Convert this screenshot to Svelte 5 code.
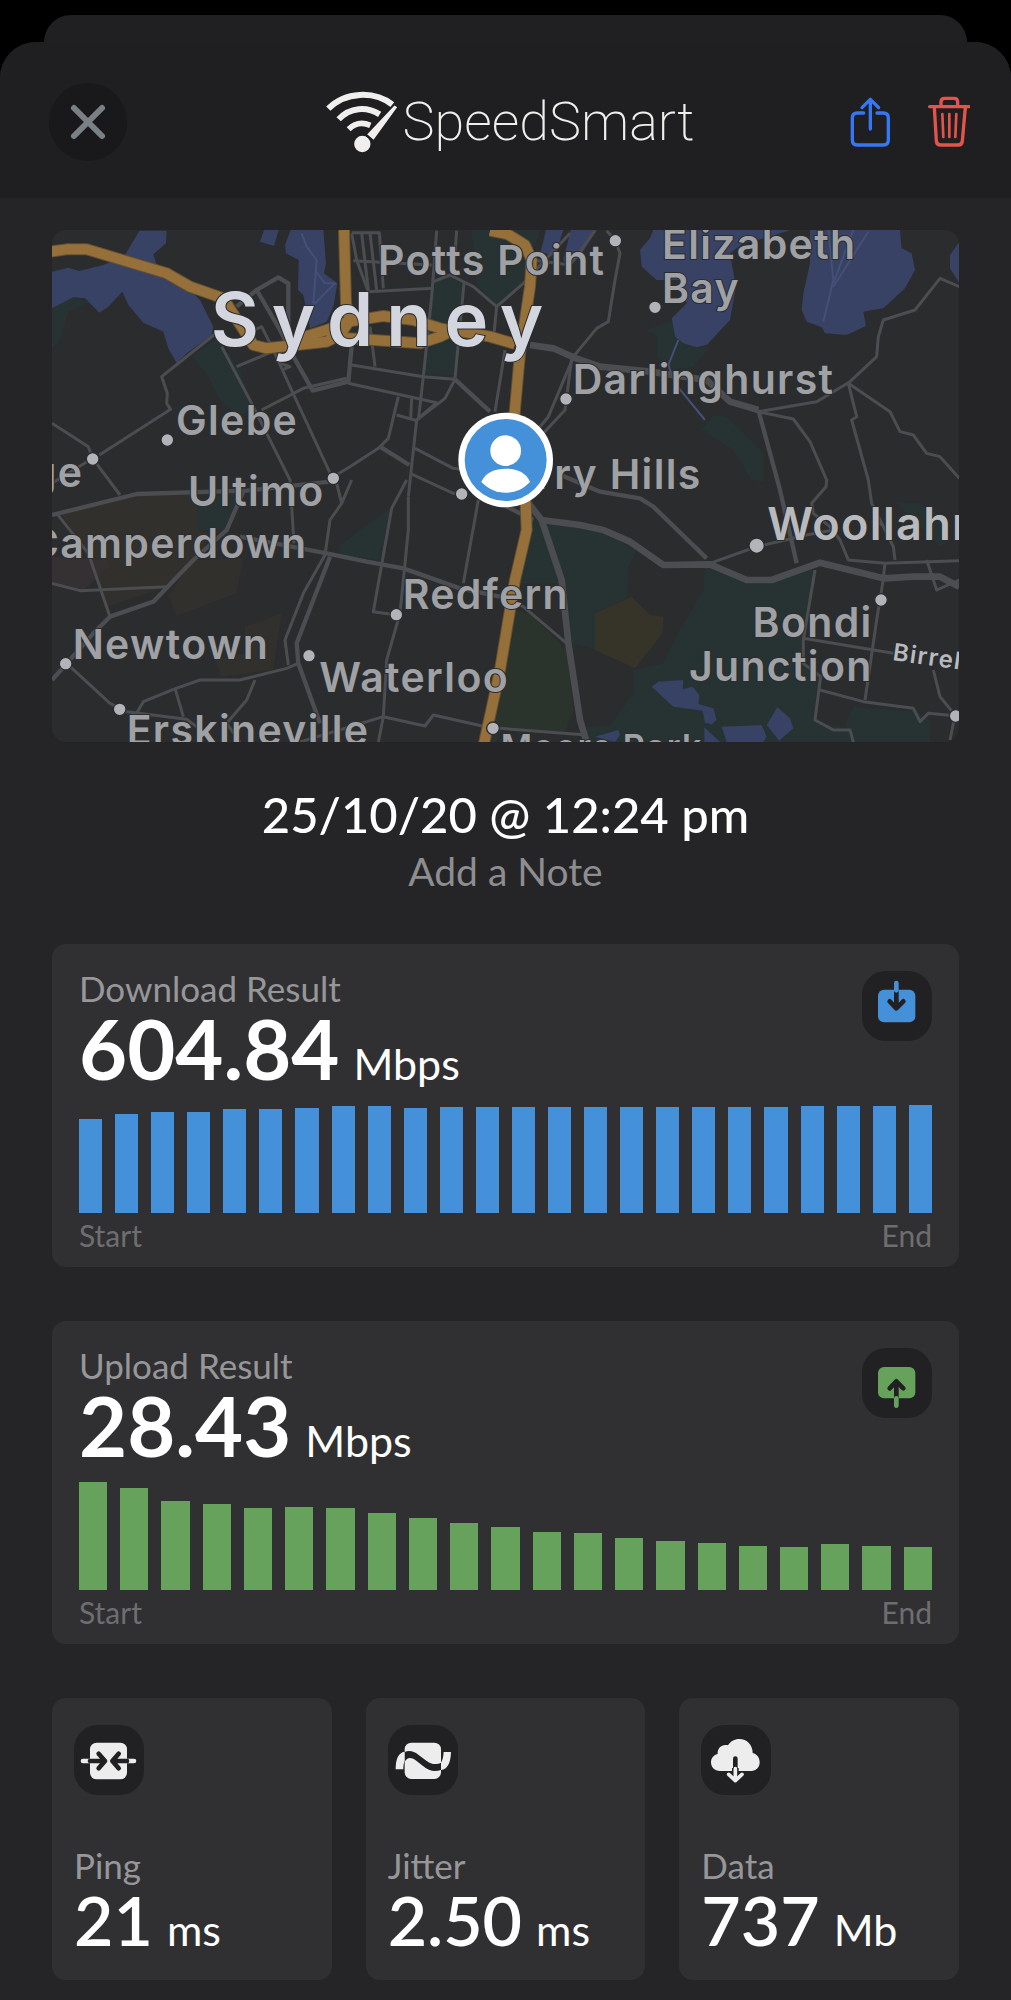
<script>
  const tests = [
    {
      id: 'download',
      title: 'Download Result',
      value: '604.84',
      bars: [94, 99, 101, 101, 104, 104, 105, 107, 107, 105, 106, 106, 106, 106, 106, 106, 106, 106, 106, 106, 107, 107, 107, 108]
    },
    {
      id: 'upload',
      title: 'Upload Result',
      value: '28.43',
      bars: [108, 102, 89, 86, 82, 83, 82, 77, 72, 67, 63, 58, 57, 52, 49, 47, 44, 43, 46, 44, 43]
    }
  ];

  const stats = [
    { id: 'ping', title: 'Ping', value: '21', unit: 'ms' },
    { id: 'jitter', title: 'Jitter', value: '2.50', unit: 'ms' },
    { id: 'data', title: 'Data', value: '737', unit: 'Mb' }
  ];

  const water = [
    '36,155 85,143 118,153 190,135 255,105 298,32 380,32 378,70 340,103 348,130 400,165 450,210 480,240 520,320 515,345 440,400 410,430 385,385 370,335 310,308 265,255 247,215 205,260 178,278 135,235 100,232 36,265',
    '672,30 716,30 702,78 660,65',
    '752,30 850,30 858,130 852,160 892,190 880,260 860,305 810,325 790,225 774,210 776,120 738,100 735,75',
    '1518,30 1570,30 1545,110 1502,95',
    '1592,30 1670,30 1620,110 1585,140 1570,120',
    '1840,30 2250,30 2190,50 2110,70 2070,100 2088,200 2070,300 2000,375 1970,382 1930,370 1905,350 1895,295 1940,250 1920,180 1850,180 1805,140 1800,90 1830,55',
    '2310,30 2580,30 2585,85 2615,100 2625,150 2595,205 2530,265 2470,275 2478,318 2420,345 2355,340 2345,322 2300,305 2285,270 2290,220 2310,130',
    '2758,65 2730,105 2730,145 2758,190',
    '1835,1400 1855,1385 1930,1380 1928,1408 1958,1400 1978,1425 1975,1452 2020,1465 2030,1500 2015,1513 1995,1508 1988,1472 1900,1460',
    '2045,1520 2165,1515 2180,1550 2170,1566 2060,1566',
    '2212,1462 2250,1495 2260,1525 2218,1562 2180,1515',
    '1993,1522 2040,1566 1993,1566',
    '1665,1550 1735,1530 1740,1545 1725,1566'
  ];

  const parks = [
    '36,265 100,232 148,245 85,275 60,360 36,385',
    '455,410 530,355 600,450 640,560 600,590 540,540 500,460',
    '1180,185 1230,165 1272,190 1270,260 1245,465 1165,468 1150,450 1175,250',
    '1295,30 1500,30 1450,190 1370,255 1310,195',
    '1820,330 1895,300 1905,350 1970,382 2010,380 1960,440 1900,450 1850,410 1850,345',
    '1985,630 2020,585 2060,590 2170,700 2172,785 2135,780 2080,690',
    '470,840 610,815 590,870 560,930 475,930',
    '900,975 1050,865 1020,1020 900,1005',
    '1995,1040 2020,1035 2120,1080 2195,1080 2280,1042 2325,1050 2290,1260 2295,1330 2340,1370 2325,1500 2435,1530 2440,1566 1645,1566 1640,1520 1710,1515 1780,1420 1780,1350 1870,1330 1920,1230 1990,1110',
    '1480,900 1690,930 1790,995 1765,1040 1762,1135 1665,1180 1670,1290 1595,1270 1565,1090 1425,1090 1460,930',
    '2440,1460 2630,1475 2670,1500 2670,1566 2440,1566 2415,1515',
    '2570,850 2640,850 2720,900 2730,960 2700,980 2620,900'
  ];

  const grounds = [
    '60,880 290,825 470,825 475,930 520,945 460,1020 380,1100 200,1160 180,1100 120,960',
    '385,1125 460,1020 610,1015 590,1120 410,1188',
    '615,1220 725,1180 700,1350 545,1370 525,1320 615,1300'
  ];

  const streets = [
    '540,330 365,470 382,520 380,550 392,568 178,705',
    '36,610 145,680 158,715 36,790',
    '160,718 240,825',
    '620,340 665,320 700,390 750,500 875,770',
    '590,440 720,385',
    '720,430 750,440 725,450',
    '545,380 640,560 750,780 762,970',
    '665,570 790,505 920,475',
    '925,490 1190,548 1130,600',
    '935,435 1150,470 1245,478',
    '1245,478 1215,535 1130,600 1105,830',
    '1150,470 1135,600',
    '1075,530 1045,655 1015,685 930,740 880,770',
    '1070,585 1130,602',
    '1115,535 1112,595',
    '1125,685 1240,745 1280,750',
    '1110,760 1240,820 1265,822',
    '935,40 950,120 985,215 1180,205',
    '965,40 985,210',
    '990,40 1010,210',
    '935,38 1018,38 1030,205',
    '940,122 1175,135',
    '1190,32 1175,230 1150,470',
    '1250,32 1240,170',
    '1180,185 1230,165 1300,200 1370,260 1450,190 1590,40',
    '1480,120 1590,135 1665,32',
    '1272,190 1245,475',
    '990,320 1005,440',
    '1370,260 1362,340',
    '1395,390 1365,575',
    '1700,32 1725,60 1740,100 1725,180 1705,305 1670,325 1600,410',
    '1600,412 1525,590 1500,620',
    '1595,415 1575,570 1510,640',
    '2155,575 2330,545 2430,485 2510,410 2515,350 2530,300 2625,270 2700,175 2758,200',
    '2155,575 2260,597 2310,665 2360,780 2358,800 2315,850 2320,880 2370,920 2400,960 2425,1020 2535,1030',
    '2425,490 2550,575 2580,635 2620,645 2660,700 2700,710 2758,775',
    '2425,490 2450,590 2435,600 2485,780 2495,850 2560,980 2565,1020',
    '2495,905 2530,915',
    '2010,1030 2150,980 2300,945 2380,930',
    '2535,1030 2758,1022',
    '2535,1030 2528,1090 2510,1200 2475,1440',
    '2325,1050 2290,1260 2290,1330 2342,1370 2325,1500 2380,1530 2430,1530 2440,1566',
    '2290,1255 2560,1300',
    '2340,1410 2470,1445 2620,1465 2640,1505 2665,1480 2750,1488',
    '2660,1020 2690,1110 2758,1080',
    '2680,1350 2700,1430 2745,1485 2730,1560',
    '1380,1130 1450,1160 1580,1270',
    '1380,1525 1640,1545',
    '50,880 145,1000 210,1190',
    '36,1090 120,1112 380,1100',
    '80,1330 210,1450 260,1475 440,1498 470,1520',
    '290,1480 310,1445 400,1408 480,1380 600,1380 740,1345 775,1330',
    '405,1405 430,1490',
    '645,1380 620,1440 560,1510 600,1566',
    '890,790 905,850 870,900 855,1005 790,1120 735,1260 745,1335',
    '935,780 905,850',
    '1100,780 1055,865 1000,1175 1070,1185',
    '1105,830 1105,930 1080,1180 1040,1320 1030,1490 1015,1566',
    '1315,840 1270,1090',
    '780,1566 1030,1490 1155,1518 1180,1485 1380,1530'
  ];

  const mainRoads = [
    '590,260 650,210 715,172 745,190 745,330',
    '650,210 720,330 755,400 818,512 925,485 935,380',
    '1245,478 1350,575',
    '1020,680 1108,735',
    '2155,570 2220,810 2270,1030',
    '1550,760 1680,815 1800,835 1840,860 2000,1015',
    '1380,850 1480,900',
    '36,885 290,822 620,812 870,785',
    '36,1380 160,1240 210,1190 340,1145 460,1020 560,930 610,815',
    '870,1010 770,1270 775,1330 840,1510',
    '600,950 860,1000 980,1025 1090,1045 1260,1105 1380,1130'
  ];

  const arterials = [
    '1470,375 1540,385 1600,412 1680,440 1830,455 2000,480 2070,545 2155,570',
    '1450,830 1505,900 1565,1080 1585,1270 1620,1500 1640,1566',
    '1505,900 1620,915 1690,930 1770,965 1870,1035 2010,1033 2120,1080 2195,1080 2340,1028 2530,1075 2620,1070 2700,1070 2758,1100'
  ];

  const highways = [
    '30,95 80,88 140,88 380,160 450,200 550,235 585,290 640,375 680,385 860,365 900,345',
    '912,30 918,250 930,300 900,345',
    '780,355 860,330 925,305 1030,288 1120,300 1200,325 1240,332',
    '860,350 1140,370 1200,350 1240,330 1350,350 1425,372',
    '1350,32 1402,42 1455,75 1475,120 1470,200 1440,400 1422,600',
    '1455,800 1460,930 1425,1080 1380,1350 1330,1580'
  ];

  const creeks = [
    '1915,360 1885,435 1905,490 1995,600',
    '785,40 800,80 830,120 820,250',
    '825,150 855,190 885,190 820,255',
    '2365,30 2380,180 2350,305',
    '2440,30 2380,190',
    '2485,35 2380,200'
  ];

  const dots = [
    [382, 660], [158, 717], [880, 775], [1726, 62], [1845, 262], [1578, 537], [1265, 822],
    [1069, 1184], [77, 1331], [807, 1307], [239, 1468], [1359, 1525], [2523, 1140], [2747, 1488]
  ];

  const places = [
    ['Potts Point', 1014, 166],
    ['Elizabeth', 1866, 118],
    ['Bay', 1866, 248],
    ['Darlinghurst', 1598, 522],
    ['Glebe', 408, 645],
    ['Ultimo', 444, 859],
    ['Newtown', 98, 1316],
    ['Redfern', 1088, 1167],
    ['Waterloo', 838, 1415],
    ['Erskineville', 260, 1575]
  ];

  const placesEnd = [
    ['Forest Lodge', 130, 802],
    ['Camperdown', 802, 1014],
    ['Surry Hills', 1985, 807],
    ['Bondi', 2498, 1252],
    ['Junction', 2498, 1384]
  ];
</script>

{#snippet icon(id)}
  <span class="tile {id}">
    <svg viewBox="15 15 210 210" aria-hidden="true">
      {#if id === 'download'}
        <rect class="fill" x="63" y="71" width="112" height="98" rx="18" />
        <path class="ink" d="M118 72V126M98 106L118 127L139 106" />
        <path class="line" d="M118 51V73" />
      {:else if id === 'upload'}
        <rect class="fill" x="63" y="72" width="112" height="94" rx="18" />
        <path class="ink" d="M118 165V116M98 136L118 115L139 136" />
        <path class="line" d="M118 166V188" />
      {:else if id === 'ping'}
        <rect class="fill" x="63" y="68" width="111" height="110" rx="20" />
        <path class="line" d="M42 123H62M175 123H195" />
        <path class="ink" d="M63 123H105M89 101L108 123L89 145M174 123H133M149 101L130 123L149 145" />
      {:else if id === 'jitter'}
        <rect class="fill" x="65" y="68" width="109" height="109" rx="20" />
        <path class="dark" d="M65 96C78 90 92 93 106 104L130 122C144 132 158 136 174 128V150C154 156 138 153 120 138L98 121C84 111 72 112 65 126Z" />
        <path class="fill" d="M38 148C38 116 46 98 65 95V122C62 130 61 138 61 148Z" />
        <path class="fill" d="M204 96C203 128 194 148 174 150V128C180 118 181 108 182 96Z" />
      {:else}
        <path class="fill" d="M72 153C56 153 45 142 45 127C45 114 53 105 65 102C63 84 79 71 96 76C103 64 116 57 130 57C153 57 170 75 170 99C183 102 191 113 191 127C191 143 180 153 166 153Z" />
        <path class="ink" d="M118 116V146" />
        <path class="dark" d="M108 144H128V160H108Z" />
        <path class="line thin" d="M118 146V180M98 163L118 182L138 163" />
      {/if}
    </svg>
  </span>
{/snippet}

<div class="screen">
  <div class="sheet-behind"></div>
  <div class="sheet">
    <header>
      <button class="close" aria-label="Close">
        <svg viewBox="0 0 78 78" aria-hidden="true"><path d="M25 25L53 53M53 25L25 53" /></svg>
      </button>
      <h1 class="brand">
        <svg viewBox="30 30 222 186" aria-hidden="true">
          <path d="M40 83C90 32 178 28 232 71" stroke-width="18" />
          <path d="M71 115C105 78 155 76 194 100" stroke-width="18" />
          <path d="M101 145C120 126 142 123 166 133" stroke-width="17" />
          <path class="solid" d="M238 70L250 78L176 180L153 160Z" />
          <circle class="solid rim" cx="142" cy="189" r="27" />
        </svg>
        <span>SpeedSmart</span>
      </h1>
      <div class="actions">
        <button aria-label="Share">
          <svg class="share" viewBox="30 42 126 156" aria-hidden="true">
            <path d="M71 93H52Q37 93 37 108V174Q37 189 52 189H130Q145 189 145 174V108Q145 93 130 93H111" />
            <path d="M91 141V54M66 77L91 52L116 77" />
          </svg>
        </button>
        <button aria-label="Delete">
          <svg class="trash" viewBox="262 42 126 156" aria-hidden="true">
            <path d="M267 74H385M281 76L287 177Q288 189 300 189H352Q364 189 365 177L374 76" />
            <path d="M301 72V60Q301 49 312 49H340Q351 49 351 60V72" />
            <path class="ribs" d="M305 96L308 165M326 96V165M347 96L344 165" />
          </svg>
        </button>
      </div>
    </header>

    <main>
      <div class="map">
        <svg viewBox="36 30 2721 1536" role="img" aria-label="Map of Sydney">
          <rect class="land" x="36" y="30" width="2721" height="1536" />
          {#each parks as p}<polygon class="park" points={p} />{/each}
          {#each grounds as p}<polygon class="ground" points={p} />{/each}
          <polygon class="hospital" points="36,1010 200,1020 210,1040 130,1110 36,1090" />
          <polygon class="track" points="1665,1180 1775,1130 1830,1185 1870,1190 1868,1240 1785,1345 1665,1290" />
          <polygon class="golf" points="1425,1170 1470,1180 1580,1290 1600,1470 1575,1535 1380,1525 1370,1566 1340,1566 1380,1380" />
          {#each water as p}<polygon class="water" points={p} />{/each}
          {#each creeks as p}<polyline class="creek" points={p} />{/each}
          {#each streets as p}<polyline class="street" points={p} />{/each}
          {#each mainRoads as p}<polyline class="main-road" points={p} />{/each}
          {#each arterials as p}<polyline class="arterial" points={p} />{/each}
          {#each highways as p}<polyline class="highway edge" points={p} />{/each}
          {#each highways as p}<polyline class="highway" points={p} />{/each}
          {#each dots as [x, y]}<circle class="dot" cx={x} cy={y} r="19" />{/each}
          <circle class="dot" cx="2150" cy="977" r="23" />
          {#each places as [name, x, y]}<text class="place" {x} {y}>{name}</text>{/each}
          {#each placesEnd as [name, x, y]}<text class="place end" {x} {y}>{name}</text>{/each}
          <text class="place suburb" x="1382" y="1618">Moore Park</text>
          <text class="place town" x="2182" y="959">Woollahra</text>
          <text class="place road-name" transform="translate(2556 1320) rotate(8)">Birrell St</text>
          <text class="city" x="512" y="378">Sydney</text>
          <circle class="ring" cx="1397" cy="720" r="142" />
          <circle class="disc" cx="1397" cy="720" r="123" />
          <circle class="ring" cx="1397" cy="692" r="46" />
          <path class="ring" d="M1324 786C1336 756 1366 746 1397 746S1458 756 1470 786C1448 808 1426 818 1397 818S1346 808 1324 786Z" />
        </svg>
      </div>

      <div class="when">
        <h2>25/10/20 @ 12:24 pm</h2>
        <button class="note">Add a Note</button>
      </div>

      {#each tests as test}
        <section class="card result {test.id}">
          <div class="top">
            <div>
              <h3>{test.title}</h3>
              <p class="reading"><strong>{test.value}</strong> <span>Mbps</span></p>
            </div>
            {@render icon(test.id)}
          </div>
          <div class="bars">
            {#each test.bars as h}<i style="height:{h}px"></i>{/each}
          </div>
          <div class="axis"><span>Start</span><span>End</span></div>
        </section>
      {/each}

      <div class="stats">
        {#each stats as stat}
          <section class="card stat">
            {@render icon(stat.id)}
            <div>
              <h3>{stat.title}</h3>
              <p class="reading"><strong>{stat.value}</strong> <span>{stat.unit}</span></p>
            </div>
          </section>
        {/each}
      </div>
    </main>
  </div>
</div>

<style>
  :global(body) {
    background: #000;
  }
  .screen {
    padding-top: 15px;
    font-family: Lato, "Liberation Sans", sans-serif;
    color: #fff;
  }
  .sheet-behind {
    height: 27px;
    margin: 0 44px;
    border-radius: 27px 27px 0 0;
    background: #202022;
  }
  .sheet {
    border-radius: 36px 36px 0 0;
    background: #252527;
    overflow: hidden;
  }
  h1, h2, h3, p {
    margin: 0;
    font-weight: 400;
  }
  button {
    padding: 0;
    border: 0;
    background: none;
    color: inherit;
    font: inherit;
  }
  svg {
    display: block;
  }

  header {
    display: grid;
    grid-template-columns: 1fr auto 1fr;
    align-items: center;
    box-sizing: border-box;
    height: 156px;
    padding: 3px 41px 0 49px;
    background: #1f1f21;
  }
  .close {
    width: 78px;
    height: 78px;
    border-radius: 50%;
    background: #19191b;
  }
  .close path {
    fill: none;
    stroke: #7a8186;
    stroke-width: 6;
    stroke-linecap: round;
  }
  .brand {
    display: flex;
    align-items: center;
    gap: 4px;
    font: 200 54px/64px Roboto, sans-serif;
    color: #f1eeee;
  }
  .brand svg {
    width: 74px;
    height: 62px;
    fill: none;
    stroke: #f1eeee;
  }
  .brand .solid {
    fill: #f1eeee;
    stroke: #1f1f21;
    stroke-width: 5;
  }
  .actions {
    display: flex;
    justify-content: flex-end;
    gap: 36px;
  }
  .actions svg {
    width: 42px;
    height: 52px;
    fill: none;
    stroke-width: 10;
    stroke-linecap: round;
    stroke-linejoin: round;
  }
  .share {
    stroke: #3478f6;
  }
  .trash {
    stroke: #e5544b;
  }
  .actions .ribs {
    stroke-width: 8;
  }

  main {
    padding: 32px 52px 20px;
  }
  .map {
    border-radius: 14px;
    overflow: hidden;
  }
  .map svg {
    width: 100%;
    height: auto;
  }
  .land { fill: #2b2c2e; }
  .park { fill: #263332; }
  .ground { fill: #32302c; }
  .hospital { fill: #353032; }
  .track { fill: #363328; }
  .golf { fill: #2b342c; }
  .water { fill: #374264; }
  polyline {
    fill: none;
    stroke: #4b4d50;
    stroke-linejoin: round;
  }
  .creek {
    stroke: #454f78;
    stroke-width: 6;
  }
  .street { stroke-width: 9; }
  .main-road { stroke-width: 13; }
  .arterial { stroke-width: 20; }
  .highway {
    stroke: #96703b;
    stroke-width: 30;
  }
  .highway.edge {
    stroke: #66502f;
    stroke-width: 36;
  }
  .dot {
    fill: #b3b4b9;
    stroke: #2b2c2e;
    stroke-width: 4;
  }
  .place, .city {
    font-family: Inter, sans-serif;
    font-size: 123px;
    font-weight: 600;
    letter-spacing: 4px;
    fill: #9fa1a5;
    stroke: #2b2c2e;
    stroke-width: 6px;
    paint-order: stroke;
  }
  .end {
    text-anchor: end;
  }
  .suburb {
    font-size: 102px;
  }
  .town {
    font-size: 135px;
    fill: #b8babe;
  }
  .road-name {
    font-size: 72px;
    fill: #b8babe;
  }
  .city {
    font-size: 222px;
    letter-spacing: 39px;
    fill: #d3d6df;
  }
  .ring { fill: #fff; }
  .disc { fill: #4490d9; }

  .when {
    display: flex;
    flex-direction: column;
    align-items: center;
    padding: 41px 0 47px;
  }
  .when h2 {
    font-size: 49px;
    font-weight: 500;
    line-height: 62px;
  }
  .note {
    font-size: 39px;
    line-height: 52px;
    color: #8e8e91;
  }

  .card {
    border-radius: 14px;
    background: #303032;
  }
  .card h3 {
    font-size: 35px;
    line-height: 34px;
    color: #97979a;
  }
  .reading {
    display: flex;
    align-items: baseline;
    gap: 14px;
    white-space: nowrap;
  }
  .reading strong {
    font-weight: 700;
  }
  .reading span {
    font-size: 43px;
    line-height: 43px;
  }
  .result {
    padding: 27px 27px 14px;
    margin-bottom: 54px;
  }
  .top {
    display: flex;
    justify-content: space-between;
    align-items: flex-start;
  }
  .result .reading {
    font-size: 83px;
    line-height: 86px;
  }
  .bars {
    display: flex;
    align-items: flex-end;
    gap: 13px;
    height: 108px;
    margin-top: 14px;
  }
  .bars i {
    flex: 1;
    background: var(--tone);
  }
  .axis {
    display: flex;
    justify-content: space-between;
    margin-top: 4px;
    font-size: 30px;
    line-height: 36px;
    color: #6e6e71;
  }
  .tile {
    --tone: #ededee;
    display: block;
    flex: none;
    width: 70px;
    height: 70px;
    border-radius: 24px;
    background: #212123;
  }
  .download { --tone: #4490d9; }
  .upload { --tone: #66a25b; }
  .fill { fill: var(--tone); }
  .dark { fill: #212123; }
  .line, .ink {
    fill: none;
    stroke: var(--tone);
    stroke-width: 14;
    stroke-linecap: round;
    stroke-linejoin: round;
  }
  .line.thin { stroke-width: 11; }
  .ink { stroke: #212123; }

  .stats {
    display: grid;
    grid-template-columns: repeat(3, 1fr);
    gap: 34px;
  }
  .stat {
    display: flex;
    flex-direction: column;
    gap: 53px;
    padding: 27px 22px 22px;
  }
  .stat .reading {
    font-size: 68px;
    line-height: 76px;
  }
  .stat strong {
    font-weight: 600;
  }
</style>
